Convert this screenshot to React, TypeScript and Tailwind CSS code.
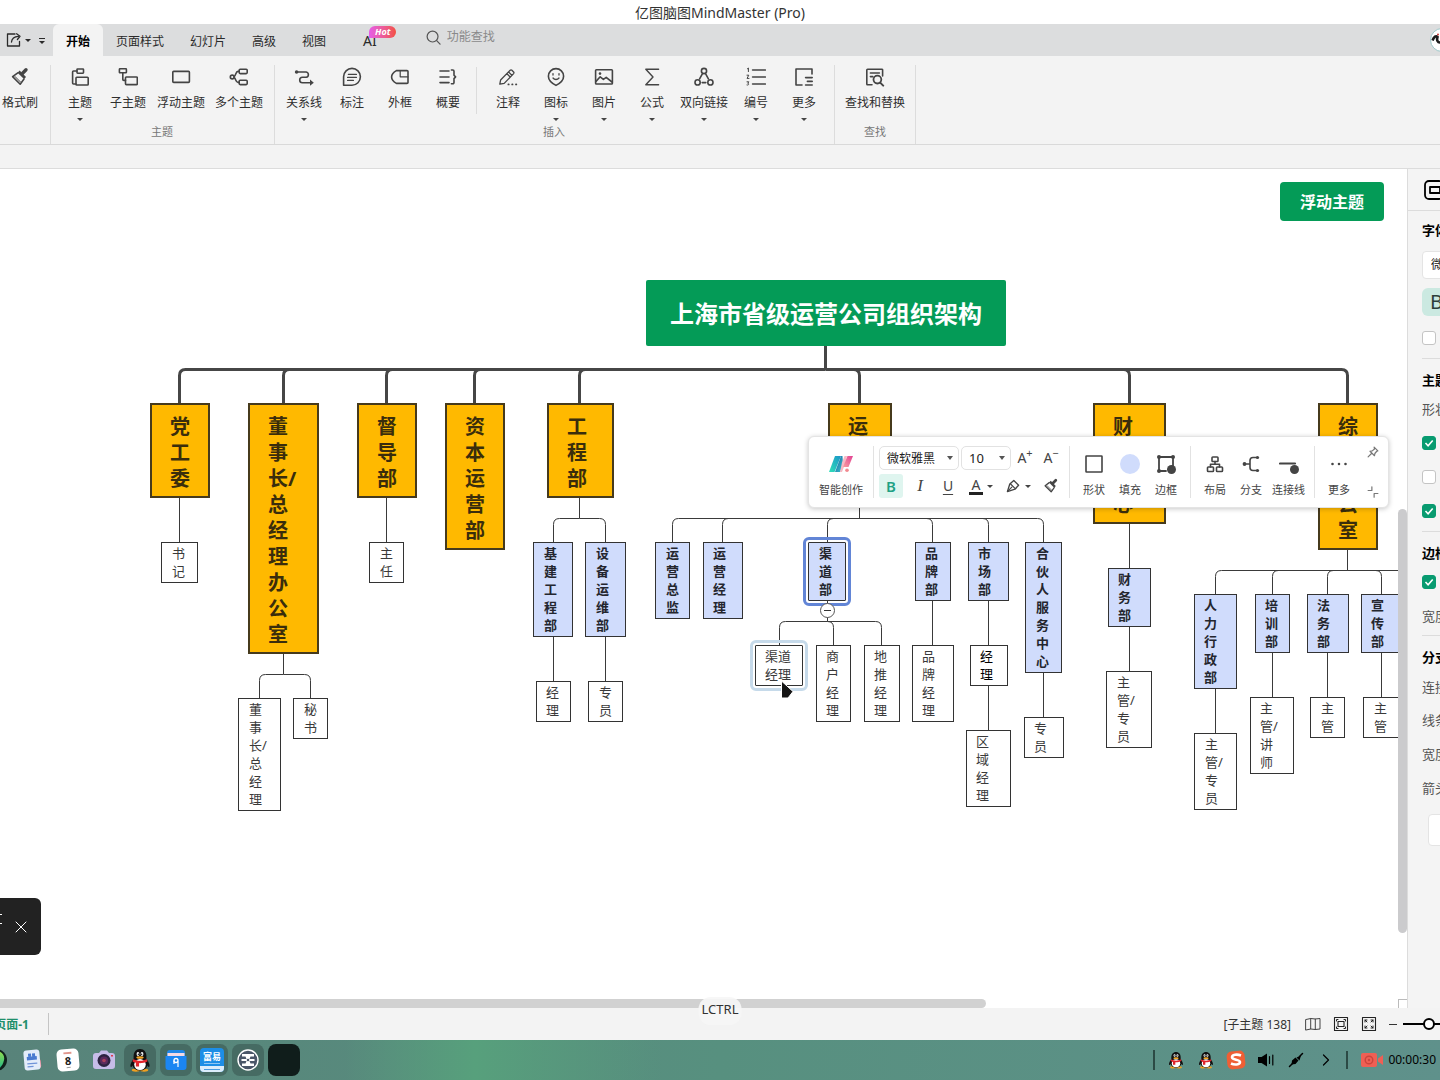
import React, { useState } from "react";

/* ------------------------------------------------------------------ */
/* Icons                                                               */
/* ------------------------------------------------------------------ */

type IconProps = { className?: string; children: React.ReactNode; box?: number };

function Icon({ className = "size-5", children, box = 20 }: IconProps) {
  return (
    <svg
      viewBox={`0 0 ${box} ${box}`}
      className={`shrink-0 ${className}`}
      fill="none"
      stroke="currentColor"
      strokeWidth="1.6"
      strokeLinejoin="round"
      strokeLinecap="round"
      aria-hidden="true"
    >
      {children}
    </svg>
  );
}

const Caret = ({ className = "h-[3px] w-1.5" }: { className?: string }) => (
  <svg viewBox="0 0 6 4" preserveAspectRatio="none" className={`shrink-0 ${className}`} aria-hidden="true">
    <path d="M0 0h6L3 4z" fill="currentColor" />
  </svg>
);

const brush = (
  <>
    <path d="M16 2.8 12.6 6.2" strokeWidth="3.4" />
    <path d="M8.6 4.6 15 11" strokeWidth="3" strokeLinecap="butt" />
    <path d="M7.8 5.8 2.6 9.6 10.2 17.2 14 12" />
    <path d="M5 9.5 10.5 15" strokeWidth="1" />
  </>
);
const topic = (
  <>
    <rect x="7" y="2" width="6.5" height="4.2" rx=".6" />
    <path d="M7 4H3.6a1 1 0 0 0-1 1v11a1 1 0 0 0 1 1H6" />
    <rect x="6" y="10.2" width="12.2" height="7.8" rx=".8" />
  </>
);
const subTopic = (
  <>
    <rect x="1.4" y="1.8" width="7" height="4" rx=".6" />
    <path d="M4.8 5.8v6.6a1 1 0 0 0 1 1h1.7" />
    <rect x="7.5" y="10" width="11.8" height="7.6" rx=".8" />
  </>
);
const floatTopic = <rect x="1.8" y="4.4" width="16.6" height="11" rx=".9" />;
const multiTopic = (
  <>
    <circle cx="3.2" cy="10" r="1.9" />
    <path d="M5.1 9.5C7 8.600 6.600 4.400 9 4.400h1.200M5.100 10.500c1.900.9 1.500 4.900 3.900 4.900h1.200" />
    <rect x="10.2" y="2.200" width="8" height="4.400" rx="1" />
    <rect x="10.2" y="13.200" width="8" height="4.400" rx="1" />
  </>
);
const relation = (
  <>
    <path d="M3 5h9.2a2.7 2.7 0 0 1 0 5.3H8.4a2.7 2.7 0 0 0 0 5.4h9" />
    <circle cx="2.6" cy="5" r="1.8" fill="currentColor" stroke="none" />
    <path d="m16 12.6 3.8 3.1-3.800 3z" fill="currentColor" stroke="none" />
  </>
);
const callout = (
  <>
    <path d="M1.6 18.2v-8.4a8.4 8.4 0 1 1 8.4 8.4z" />
    <path d="M6.4 7.4h8M5.6 10.4h8.8M5.6 13.4h5.8" strokeWidth="1.3" />
  </>
);
const frame = (
  <>
    <path d="M6.4 3.6H17a1 1 0 0 1 1 1v10.8a1 1 0 0 1-1 1H6.4C3.6 14.8 1.6 12.6 1.6 10s2-4.8 4.8-6.4z" />
    <path d="M10.2 3.8v6H18" strokeWidth="1.2" />
  </>
);
const summary = (
  <>
    <path d="M2 4h9M2 10h9M2 15.6h9" />
    <path d="M13.4 3h1.4a1.2 1.2 0 0 1 1.2 1.2v4l1.6 1.7-1.6 1.7v4a1.2 1.2 0 0 1-1.2 1.2h-1.4" />
  </>
);
const note = (
  <>
    <path d="m2.6 13 9.6-9.8a1.2 1.2 0 0 1 1.7 0l1.7 1.8a1.2 1.2 0 0 1 0 1.6L6.2 16.4l-4.4.8zM10.600 5l3.400 3.400M9 6.800l3.200 3.200" strokeWidth="1.3" />
    <path d="M10.4 17.4h.3M14.2 17.4h.3M18 17.4h.3" strokeWidth="1.8" />
  </>
);
const smile = (
  <>
    <path d="M10 18.4c-3.4-1.8-7.6-4.6-7.6-9.2a7.6 7.6 0 0 1 15.200 0c0 4.600-4.200 7.400-7.600 9.200z" />
    <path d="M7 6.6V8M13 6.6V8M7 11c1.5 2 4.500 2 6 0" strokeWidth="1.3" />
  </>
);
const picture = (
  <>
    <rect x="1.6" y="2.8" width="16.8" height="14.2" rx=".8" />
    <path d="m2 14.4 4.2-4.6 3.2 2.600 2.800-2 5.800 4.600" />
    <circle cx="6" cy="6.6" r="1.3" fill="currentColor" stroke="none" />
  </>
);
const sigma = <path d="M16.6 2.2H3.800L11 10l-7.200 7.800h12.800" strokeWidth="1.4" />;
const link = (
  <>
    <circle cx="10" cy="4" r="2.6" />
    <circle cx="3.6" cy="15.4" r="2.6" />
    <circle cx="16.4" cy="15.4" r="2.6" />
    <path d="M8.2 7.2 5.6 11.8M11.8 7.2l2.600 4.600M8.200 15.600h3.600" />
  </>
);
const numbering = (
  <>
    <path d="M6.600 3h12.800M6.600 10h12.800M6.600 17h12.800" />
    <path d="M1.4 1.8 2.4 1v3.600M1 8.200h1.800L1 11.400h2M1 14.800h1.800l-1 1.500c1.600.2 1 2.300-.8 1.700" strokeWidth="1" />
  </>
);
const more = (
  <>
    <path d="M8 18H2V2h16v5" />
    <path d="M11.6 10.6h6.600M13.400 14.400h4.800M11.600 18h6.600" />
  </>
);
const findReplace = (
  <>
    <path d="M7 17.8H2.600a.8.8 0 0 1-.8-.8V3a.8.8 0 0 1 .8-.8h14.200a.8.8 0 0 1 .8.8v6" />
    <path d="M5.400 6h9M5.400 9.600h2.400" />
    <circle cx="12.4" cy="12.6" r="3.9" strokeWidth="1.8" />
    <path d="m15.200 15.600 3 3" strokeWidth="2" />
  </>
);

const Penguin = ({ className }: { className: string }) => (
  <svg viewBox="0 0 24 26" className={`shrink-0 ${className}`} aria-hidden="true">
    <ellipse cx="7.5" cy="24" rx="4.5" ry="1.8" fill="#f0a020" />
    <ellipse cx="16.5" cy="24" rx="4.5" ry="1.8" fill="#f0a020" />
    <path d="M5 12C1.5 16 1 20 2 20.5c1 .4 2-1.500 2-1.500h16s1 1.900 2 1.500c1-.5.5-4.500-3-8.500z" fill="#111" />
    <path d="M12 1C7.5 1 5 4.5 5 9v5h14V9c0-4.500-2.500-8-7-8z" fill="#111" />
    <ellipse cx="12" cy="17.5" rx="8.2" ry="7" fill="#111" />
    <ellipse cx="12" cy="18" rx="6.3" ry="6" fill="#fff" />
    <path d="M4.5 12c4.500 2.600 10.500 2.600 15 0l.6 2.600c-2.500 1.300-6 1.900-9.100 1.800V20H7.500v-4.100c-1.500-.3-2.700-.7-3.600-1.300z" fill="#e0262c" />
    <ellipse cx="9.8" cy="6.4" rx="1.5" ry="2.1" fill="#fff" />
    <ellipse cx="14.2" cy="6.4" rx="1.5" ry="2.1" fill="#fff" />
    <circle cx="10.2" cy="6.7" r=".8" fill="#111" />
    <circle cx="13.8" cy="6.7" r=".8" fill="#111" />
    <ellipse cx="12" cy="10.2" rx="4" ry="1.4" fill="#f5a623" />
  </svg>
);

/* ------------------------------------------------------------------ */
/* Ribbon                                                              */
/* ------------------------------------------------------------------ */

type Tool = { label: string; icon: React.ReactNode; width?: string; caret?: boolean };

function RibbonButton({ label, icon, width = "w-12", caret }: Tool) {
  return (
    <button type="button" className={`flex shrink-0 flex-col items-center ${width}`}>
      <Icon>{icon}</Icon>
      <span className="mt-2 text-xs leading-4 whitespace-nowrap text-[#2e2e2e]">{label}</span>
      {caret && <Caret className="mt-[7px] h-[3px] w-1.5" />}
    </button>
  );
}

function RibbonGroup({ title, pad, children }: { title: string; pad: string; children: React.ReactNode }) {
  return (
    <section className={`flex shrink-0 flex-col border-r border-[#dcdcdc] ${pad}`}>
      <div className="mt-0.5 flex h-[57px]">{children}</div>
      <h2 className="text-center text-[11px] leading-4 text-[#777]">{title}</h2>
    </section>
  );
}

const topicTools: Tool[] = [
  { label: "主题", icon: topic, caret: true },
  { label: "子主题", icon: subTopic },
  { label: "浮动主题", icon: floatTopic, width: "w-[58px]" },
  { label: "多个主题", icon: multiTopic, width: "w-[58px]" },
];
const markTools: Tool[] = [
  { label: "关系线", icon: relation, caret: true },
  { label: "标注", icon: callout },
  { label: "外框", icon: frame },
  { label: "概要", icon: summary },
];
const insertTools: Tool[] = [
  { label: "注释", icon: note },
  { label: "图标", icon: smile, caret: true },
  { label: "图片", icon: picture, caret: true },
  { label: "公式", icon: sigma, caret: true },
  { label: "双向链接", icon: link, width: "w-14", caret: true },
  { label: "编号", icon: numbering, caret: true },
  { label: "更多", icon: more, caret: true },
];

function Ribbon() {
  return (
    <div className="flex h-[89px] shrink-0 overflow-hidden border-b border-[#d9d9d9] bg-[#f3f3f3] pt-[9px] text-[#444]">
      <section className="flex w-[51px] shrink-0 border-r border-[#dcdcdc] pt-0.5">
        <RibbonButton label="格式刷" icon={brush} width="w-10" />
      </section>
      <RibbonGroup title="主题" pad="pl-[5px] pr-[6px]">
        {topicTools.map((t) => (
          <RibbonButton key={t.label} {...t} />
        ))}
      </RibbonGroup>
      <RibbonGroup title="插入" pad="pl-[5px] pr-[6px]">
        {markTools.map((t) => (
          <RibbonButton key={t.label} {...t} />
        ))}
        <div className="mr-[7px] ml-1 h-[47px] w-px bg-[#dcdcdc]" />
        {insertTools.map((t) => (
          <RibbonButton key={t.label} {...t} />
        ))}
      </RibbonGroup>
      <RibbonGroup title="查找" pad="px-2">
        <RibbonButton label="查找和替换" icon={findReplace} width="w-16" />
      </RibbonGroup>
    </div>
  );
}

function TabBar() {
  const tabs = ["开始", "页面样式", "幻灯片", "高级", "视图"];
  return (
    <div className="flex h-8 shrink-0 items-stretch overflow-hidden bg-[#dcddde] text-[#2a2a2a]">
      <div className="flex w-[53px] shrink-0 items-center pl-1.5">
        <button type="button" aria-label="导出" className="flex items-center gap-[3px]">
          <Icon className="size-4" box={16}>
            <path d="M9 2H1.500v12h12V9.500M5.500 10c.3-3.600 2.500-5.500 7-5.700" strokeWidth="1.3" />
            <path d="m10.600 1.800 3.400 2.500-2.600 3.200" strokeWidth="1.3" />
          </Icon>
          <Caret />
        </button>
        <button type="button" aria-label="自定义快速访问" className="mt-0.5 ml-2 flex flex-col items-center gap-0.5">
          <span className="h-px w-1.5 bg-[#2a2a2a]" />
          <Caret />
        </button>
      </div>
      <nav className="flex shrink-0 text-xs">
        {tabs.map((t, i) => (
          <button
            key={t}
            type="button"
            className={
              i === 0
                ? "rounded-t-md bg-[#f3f3f3] px-[13px] pt-[3px] font-bold text-black"
                : "px-[13px] pt-[3px]"
            }
          >
            {t}
          </button>
        ))}
        <button type="button" className="relative ml-[11px] px-[13px] pt-0.5 text-sm">
          AI
          <span className="absolute top-0.5 left-[19px] rounded-full rounded-bl-none bg-linear-to-r from-[#e65be8] to-[#f3503f] px-1.5 text-[9px] leading-3 font-bold text-white italic">
            Hot
          </span>
        </button>
      </nav>
      <label className="ml-9 flex h-[26px] w-40 shrink-0 items-center gap-1.5 text-[#555]">
        <Icon className="size-[15px]" box={16}>
          <circle cx="7" cy="7" r="5.8" strokeWidth="1.3" />
          <path d="m11.400 11.400 3.600 3.600" strokeWidth="1.3" />
        </Icon>
        <input
          type="text"
          aria-label="功能查找"
          placeholder="功能查找"
          className="w-full bg-transparent text-xs outline-none placeholder:text-[#8a8a8a]"
        />
      </label>
      <div className="ml-auto -mr-3.5 flex shrink-0 items-center">
        <svg viewBox="0 0 24 24" className="size-6" aria-hidden="true">
          <circle cx="12" cy="12" r="11.5" fill="#fff" stroke="#9cc7c9" />
          <path d="M2.500 12.500C4 8.500 6 7.500 7.500 9c-1 3 0 6 3 5.500 2-.5 3-3 5.500-2.500" fill="none" stroke="#1c1c1c" strokeWidth="2.600" />
          <circle cx="8" cy="6.500" r="1" fill="#c33" />
        </svg>
      </div>
    </div>
  );
}

/* ------------------------------------------------------------------ */
/* Org chart                                                           */
/* ------------------------------------------------------------------ */

type Kind = "dept" | "team" | "role";
type ChartNode = {
  kind: Kind;
  x: number;
  y: number;
  w: number;
  pad: number;
  lines: string[];
  state?: "selected" | "hover" | "dark";
};

/* Chart coordinates are measured from the window's top edge. */
const CHART_TOP = 169;

const n = (kind: Kind, x: number, y: number, w: number, pad: number, text: string, state?: ChartNode["state"]): ChartNode => ({
  kind,
  x,
  y,
  w,
  pad,
  lines: text.split(" "),
  state,
});

const nodes: ChartNode[] = [
  n("dept", 150, 403, 60, 18, "党 工 委"),
  n("dept", 248, 403, 71, 18, "董 事 长/ 总 经 理 办 公 室"),
  n("dept", 357, 403, 60, 18, "督 导 部"),
  n("dept", 445, 403, 60, 18, "资 本 运 营 部"),
  n("dept", 547, 403, 67, 18, "工 程 部"),
  n("dept", 828, 403, 64, 18, "运 营 部"),
  n("dept", 1093, 403, 73, 18, "财 务 中 心"),
  n("dept", 1318, 403, 60, 18, "综 合 办 公 室"),
  n("role", 161, 542, 37, 10, "书 记"),
  n("role", 369, 542, 35, 10, "主 任"),
  n("role", 238, 698, 43, 10, "董 事 长/ 总 经 理"),
  n("role", 293, 698, 35, 10, "秘 书"),
  n("team", 533, 542, 40, 10, "基 建 工 程 部"),
  n("team", 585, 542, 41, 10, "设 备 运 维 部"),
  n("role", 536, 681, 35, 9, "经 理"),
  n("role", 588, 681, 35, 10, "专 员"),
  n("team", 655, 542, 35, 10, "运 营 总 监"),
  n("team", 703, 542, 40, 9, "运 营 经 理"),
  n("team", 808, 542, 38, 10, "渠 道 部", "selected"),
  n("team", 915, 542, 36, 9, "品 牌 部"),
  n("team", 968, 542, 41, 9, "市 场 部"),
  n("team", 1025, 542, 37, 10, "合 伙 人 服 务 中 心"),
  n("role", 755, 645, 48, 9, "渠道 经理", "hover"),
  n("role", 816, 645, 35, 9, "商 户 经 理"),
  n("role", 864, 645, 36, 9, "地 推 经 理"),
  n("role", 912, 645, 42, 9, "品 牌 经 理"),
  n("role", 970, 645, 38, 9, "经 理", "dark"),
  n("role", 966, 730, 45, 9, "区 域 经 理"),
  n("role", 1024, 717, 40, 9, "专 员"),
  n("team", 1108, 568, 43, 9, "财 务 部"),
  n("role", 1106, 671, 46, 10, "主 管/ 专 员"),
  n("team", 1194, 594, 43, 9, "人 力 行 政 部"),
  n("team", 1255, 594, 35, 9, "培 训 部"),
  n("team", 1307, 594, 42, 9, "法 务 部"),
  n("team", 1361, 594, 42, 9, "宣 传 部"),
  n("role", 1194, 733, 43, 10, "主 管/ 专 员"),
  n("role", 1250, 697, 44, 9, "主 管/ 讲 师"),
  n("role", 1310, 697, 35, 10, "主 管"),
  n("role", 1363, 697, 38, 10, "主 管"),
];

const kindClass: Record<Kind, string> = {
  dept: "border-2 border-[#463a1c] bg-[#ffb900] pt-[9px] pb-1 text-[20px] leading-[26px] font-bold text-[#3a2d0c]",
  team: "border border-[#333] bg-[#d0dcfc] pt-px pb-0.5 text-[13px] leading-[18px] font-bold text-[#24262e]",
  role: "border border-[#333] bg-white pt-px pb-0.5 text-[13px] leading-[18px] text-[#3a3a3a]",
};
const stateClass = {
  selected: "rounded-[1px] outline-3 outline-offset-2 outline-[#6285d6]",
  hover: "rounded-[1px] outline-3 outline-offset-2 outline-[#c6daea]",
  dark: "text-black",
};

function NodeBox({ node }: { node: ChartNode }) {
  return (
    <div
      className={`absolute whitespace-nowrap ${kindClass[node.kind]} ${node.state ? stateClass[node.state] : ""}`}
      style={{ left: node.x, top: node.y - CHART_TOP, width: node.w, paddingLeft: node.pad }}
    >
      {node.lines.map((line, i) => (
        <div key={i}>{line}</div>
      ))}
    </div>
  );
}

/* A bus line with rounded drops to each child. */
function branch(trunk: number, top: number, bus: number, bottom: number, kids: number[]) {
  const r = 6;
  const drops = kids.map((k) => {
    const s = k < trunk ? r : -r;
    return `M${k} ${bottom}V${bus + r}Q${k} ${bus} ${k + s} ${bus}H${trunk}`;
  });
  return `M${trunk} ${top}V${bus}${drops.join("")}`;
}

const thinLines = [
  branch(283.5, 654, 674.5, 698, [259.5, 310.5]),
  branch(579.5, 498, 518.5, 542, [553.5, 605.5]),
  branch(859.5, 498, 518.5, 542, [672.5, 722.5, 827.5, 932.5, 988.5, 1043.5]),
  branch(827.5, 601, 621.5, 645, [779.5, 833.5, 881.5]),
  branch(1347.5, 550, 570.5, 594, [1215.5, 1272.5, 1327.5, 1381.5]),
  "M1375 570.5H1440",
  "M179.5 498V542M386.5 498V542M553.5 637V681M605.5 637V681",
  "M932.5 601V645M988.5 601V645M988.5 686V730M1043.5 673V717",
  "M1129.5 524V568M1129.5 627V671M1215.5 689V733M1272.5 653V697M1327.5 653V697M1381.5 653V697",
].join("");

function Chart() {
  return (
    <>
      <svg
        viewBox="0 169 1440 830"
        className="absolute top-0 left-0 h-[830px] w-[1440px]"
        fill="none"
        aria-hidden="true"
      >
        <path
          d={branch(825.5, 346, 369.5, 403, [179.5, 283.5, 386.5, 474.5, 579.5, 859.5, 1129.5, 1347.5])}
          stroke="#464646"
          strokeWidth="3"
        />
        <path d={thinLines} stroke="#3a3a3a" strokeWidth="1" />
      </svg>
      <div className="absolute top-[111px] left-[646px] rounded-xs bg-[#049b57] px-6 pt-4 pb-3.5 text-2xl leading-9 font-bold whitespace-nowrap text-white">
        上海市省级运营公司组织架构
      </div>
      <div className="absolute top-[13px] left-[1280px] rounded bg-[#049b57] px-5 pt-[9px] pb-[7px] text-base leading-[23px] font-bold whitespace-nowrap text-white">
        浮动主题
      </div>
      {nodes.map((node, i) => (
        <NodeBox key={i} node={node} />
      ))}
      <button
        type="button"
        aria-label="收起子主题"
        className="absolute top-[434px] left-[820px] grid size-[15px] place-items-center rounded-full border border-[#555] bg-white"
      >
        <span className="h-px w-[7px] bg-[#333]" />
      </button>
      <svg viewBox="0 0 14 20" className="absolute top-[511px] left-[780px] h-5 w-3.5" aria-hidden="true">
        <path d="M1.500 1v17h6.500l5-6.500z" fill="#151515" stroke="#fff" />
      </svg>
    </>
  );
}

/* ------------------------------------------------------------------ */
/* Floating format bar                                                 */
/* ------------------------------------------------------------------ */

function FormatItem({ label, icon, width = "w-9" }: { label: string; icon: React.ReactNode; width?: string }) {
  return (
    <button type="button" className={`flex shrink-0 flex-col items-center pt-[17px] ${width}`}>
      {icon}
      <span className="mt-2 text-[11px] leading-4 whitespace-nowrap text-[#444]">{label}</span>
    </button>
  );
}

const BarRule = () => <div className="h-[52px] w-px shrink-0 self-center bg-[#e2e2e2]" />;

function Dropdown({ label, value, width, size }: { label: string; value: string; width: string; size: string }) {
  return (
    <div className={`relative flex h-6 items-center rounded-[5px] border border-[#e2e2e2] ${width}`}>
      <select
        aria-label={label}
        defaultValue={value}
        className={`h-full w-full appearance-none bg-transparent pt-px pl-[7px] text-[#1d1d1d] outline-none ${size}`}
      >
        <option>{value}</option>
      </select>
      <Caret className="pointer-events-none absolute right-[5px] h-1 w-1.5 text-[#555]" />
    </div>
  );
}

function FormatBar() {
  return (
    <div
      role="toolbar"
      aria-label="格式"
      className="absolute top-[267px] left-[808px] flex h-[72px] rounded-md border border-[#e4e4e4] bg-white text-[#444] shadow-[0_1px_5px_rgba(0,0,0,0.22)]"
    >
      <FormatItem
        label="智能创作"
        width="w-16"
        icon={
          <svg viewBox="0 0 24 20" className="h-5 w-6" aria-hidden="true">
            <defs>
              <linearGradient id="mA" x1="0" y1="1" x2="1" y2="0">
                <stop offset="0" stopColor="#2fe0b8" />
                <stop offset="1" stopColor="#1a94c8" />
              </linearGradient>
              <linearGradient id="mB" x1="0" y1="0" x2="1" y2="1">
                <stop offset="0" stopColor="#1e5c9c" />
                <stop offset="1" stopColor="#35c7cf" />
              </linearGradient>
              <linearGradient id="mC" x1="0" y1="1" x2="1" y2="0">
                <stop offset="0" stopColor="#f8a0a0" />
                <stop offset="1" stopColor="#e23f92" />
              </linearGradient>
            </defs>
            <path d="M6 2h6L5.500 18H0z" fill="url(#mA)" />
            <path d="M10.500 6 12 2h1.500l.5 8-3 8H6z" fill="url(#mB)" />
            <path d="M13 8.500 15.500 2H18l-2.500 9.500L13 18h-2z" fill="#f7b9c4" />
            <path d="M18.500 2H24l-4.500 11H14z" fill="url(#mC)" />
            <circle cx="18" cy="16.300" r="1.800" fill="#f2898f" />
          </svg>
        }
      />
      <BarRule />
      <div className="flex w-[195px] shrink-0 flex-col pt-[9px] pl-[5px]">
        <div className="flex items-center">
          <Dropdown label="字体" value="微软雅黑" width="w-20" size="text-xs" />
          <div className="ml-0.5">
            <Dropdown label="字号" value="10" width="w-[50px]" size="text-[13px]" />
          </div>
          <button type="button" aria-label="增大字号" className="ml-px w-[26px] text-sm leading-5">
            A<sup className="-top-1.5 text-[11px]">+</sup>
          </button>
          <button type="button" aria-label="减小字号" className="w-[26px] text-sm leading-5">
            A<sup className="-top-1.5 text-[11px]">−</sup>
          </button>
        </div>
        <div className="mt-1 flex h-6 items-center">
          <button type="button" aria-label="加粗" className="grid size-6 place-items-center rounded-[3px] bg-[#dff5ef] text-[15px] leading-none font-semibold text-[#1fa184]">
            B
          </button>
          <button type="button" aria-label="斜体" className="ml-[7px] w-5 font-['Liberation_Serif'] text-[17px] leading-5 italic">
            I
          </button>
          <button type="button" aria-label="下划线" className="ml-2 w-5 text-sm leading-5 underline underline-offset-3">
            U
          </button>
          <button type="button" aria-label="文字颜色" className="ml-[11px] flex items-center gap-1">
            <span className="w-[14px] border-b-3 border-[#222] text-sm leading-[14px]">A</span>
            <Caret />
          </button>
          <button type="button" aria-label="高亮" className="ml-3 flex items-center gap-1">
            <Icon className="size-4">
              <path d="M3 17 6 7.500 11 3l6 6-4.500 5z" strokeWidth="1.700" />
              <path d="m3.500 16.500 5-5M7 7.500l5.500 5.500" strokeWidth="1.500" />
            </Icon>
            <Caret />
          </button>
          <button type="button" aria-label="格式刷" className="ml-3">
            <Icon className="size-4">{brush}</Icon>
          </button>
        </div>
      </div>
      <BarRule />
      <div className="flex shrink-0 px-1.5">
        <FormatItem label="形状" icon={<Icon><rect x="2" y="2" width="16" height="16" rx=".5" /></Icon>} />
        <FormatItem label="填充" icon={<span className="size-5 rounded-full bg-[#d0dcfc]" />} />
        <FormatItem
          label="边框"
          icon={
            <Icon>
              <path d="M3 3h14v9M3 3v14h7" strokeWidth="1.8" />
              <g fill="currentColor" stroke="none">
                <circle cx="3" cy="3" r="2" />
                <circle cx="17" cy="3" r="2" />
                <circle cx="3" cy="17" r="2" />
                <circle cx="15.5" cy="15.5" r="4.5" />
              </g>
            </Icon>
          }
        />
      </div>
      <BarRule />
      <div className="flex shrink-0 px-1.5">
        <FormatItem
          label="布局"
          icon={
            <Icon>
              <rect x="7" y="3" width="6" height="4.5" rx=".8" />
              <rect x="2.5" y="13" width="6" height="4.5" rx=".8" />
              <rect x="11.5" y="13" width="6" height="4.5" rx=".8" />
              <path d="M10 7.500v2.700M5.500 13v-2.800h9V13" />
            </Icon>
          }
        />
        <FormatItem
          label="分支"
          icon={
            <Icon>
              <path d="M4 10h5M16 3.500h-4a3 3 0 0 0-3 3v7a3 3 0 0 0 3 3h4" />
              <g fill="currentColor" stroke="none">
                <circle cx="3.5" cy="10" r="1.9" />
                <circle cx="16.5" cy="3.5" r="1.6" />
                <circle cx="16.5" cy="16.5" r="1.6" />
              </g>
            </Icon>
          }
        />
        <FormatItem
          label="连接线"
          width="w-[39px]"
          icon={
            <Icon>
              <path d="M1 9.500h15" strokeWidth="2.200" />
              <circle cx="15.5" cy="15.5" r="4.5" fill="currentColor" stroke="none" />
            </Icon>
          }
        />
      </div>
      <BarRule />
      <div className="flex shrink-0 pl-1.5">
        <FormatItem label="更多" icon={<Icon><path d="M3.500 10h.01M10 10h.01M16.500 10h.01" strokeWidth="2.600" /></Icon>} />
      </div>
      <div className="flex w-[31px] shrink-0 flex-col items-center justify-between py-[9px] text-[#777]">
        <button type="button" aria-label="固定">
          <Icon className="size-3" box={16}>
            <path d="m9.500 1.500 5 5-1.500.5-2.500 3-.5 3-6-6 3-.5 3-2.500zM6 10l-4.500 4.500" />
          </Icon>
        </button>
        <button type="button" aria-label="收起">
          <Icon className="size-3" box={16}>
            <path d="M1.500 6h5V1M14.500 10h-5v5" />
          </Icon>
        </button>
      </div>
    </div>
  );
}

/* ------------------------------------------------------------------ */
/* Right-hand panel                                                    */
/* ------------------------------------------------------------------ */

const PanelHeading = ({ children }: { children: React.ReactNode }) => (
  <h2 className="flex h-[42px] items-center pt-0.5 text-[13px] font-bold text-black">{children}</h2>
);
const PanelRow = ({ children }: { children: React.ReactNode }) => (
  <div className="flex h-[34px] items-center text-[13px] text-[#555]">{children}</div>
);

function Tick({ label, on }: { label: string; on?: boolean }) {
  const [checked, setChecked] = useState(!!on);
  return (
    <span className="relative grid size-3.5 place-items-center">
      <input
        type="checkbox"
        aria-label={label}
        checked={checked}
        onChange={(e) => setChecked(e.target.checked)}
        className="size-3.5 appearance-none rounded-[3px] border border-[#c4c4c4] bg-white checked:border-[#089b70] checked:bg-[#089b70]"
      />
      {checked && (
        <svg viewBox="0 0 14 14" className="pointer-events-none absolute inset-0 size-3.5" fill="none" stroke="#fff" strokeWidth="1.6" aria-hidden="true">
          <path d="m3.500 7 2.600 2.700 4.600-5.200" />
        </svg>
      )}
    </span>
  );
}

function SidePanel() {
  return (
    <aside className="w-[33px] shrink-0 overflow-hidden border-l border-[#dcdcdc] bg-[#f4f4f4]">
      <div className="w-[260px]">
        <div className="flex h-[42px] items-center border-b border-[#dcdcdc] pl-4">
          <Icon className="size-5 text-black">
            <rect x="1" y="1" width="18" height="18" rx="4" strokeWidth="1.8" />
            <rect x="6" y="7" width="10" height="6" strokeWidth="1.8" />
          </Icon>
        </div>
        <div className="pl-3.5">
          <h2 className="flex h-10 items-center text-[13px] font-bold text-black">字体</h2>
          <select
            aria-label="字体"
            defaultValue="微软雅黑"
            className="block h-7 w-40 appearance-none rounded border border-[#e4e4e4] bg-white pl-2 text-xs text-[#222]"
          >
            <option>微软雅黑</option>
          </select>
          <button type="button" aria-label="加粗" className="mt-[9px] block h-7 w-8 rounded-md bg-[#cbe9e1] pl-2 text-left text-[20px] leading-7 text-[#2b3d3a]">
            B
          </button>
          <div className="mt-px flex h-[42px] items-center border-b border-[#dcdcdc]">
            <Tick label="自动适应" />
          </div>
          <PanelHeading>主题</PanelHeading>
          <div className="flex h-[18px] items-center text-[13px] text-[#555]">形状</div>
          <div className="border-b border-[#dcdcdc] pt-[7px] pb-[3px]">
            <PanelRow><Tick label="填充" on /></PanelRow>
            <PanelRow><Tick label="阴影" /></PanelRow>
            <PanelRow><Tick label="自定义宽度" on /></PanelRow>
          </div>
          <PanelHeading>边框</PanelHeading>
          <div className="flex h-4 items-center"><Tick label="边框" on /></div>
          <div className="mt-2 flex h-[38px] items-center border-b border-[#dcdcdc] text-[13px] text-[#555]">宽度</div>
          <PanelHeading>分支</PanelHeading>
          <div className="mt-px mb-[7px] flex h-[18px] items-center text-[13px] text-[#555]">连接线</div>
          <PanelRow>线条</PanelRow>
          <PanelRow>宽度</PanelRow>
          <PanelRow>箭头</PanelRow>
          <div className="mt-2 ml-1.5 h-8 w-40 rounded border border-[#e4e4e4] bg-white" />
        </div>
      </div>
    </aside>
  );
}

/* ------------------------------------------------------------------ */
/* Status bar and taskbar                                              */
/* ------------------------------------------------------------------ */

function StatusBar() {
  return (
    <footer className="flex h-8 shrink-0 items-center overflow-hidden bg-[#f3f3f3] text-xs text-[#333]">
      <button type="button" className="flex h-[22px] w-[49px] shrink-0 items-center justify-end border-r border-[#c4c4c4] pt-0.5 pr-[19px] font-bold whitespace-nowrap text-[#1f8f6b]">
        页面-1
      </button>
      <div className="ml-auto -mr-[19px] flex shrink-0 items-center">
        <span className="pt-0.5">[子主题 138]</span>
        <button type="button" aria-label="导航图" className="ml-3.5">
          <Icon className="size-4 text-[#444]" box={16}>
            <path d="m1 3.500 4.700-1v10.500L1 14zM5.700 2.500 10.300 3v10.500l-4.600-.5M10.300 3 15 2.500V13l-4.700.5" strokeWidth="1" />
          </Icon>
        </button>
        <button type="button" aria-label="适应窗口" className="ml-3">
          <Icon className="size-4 text-[#222]" box={16}>
            <rect x="1.500" y="1.500" width="13" height="13" strokeWidth="1.1" />
            <rect x="5" y="5.500" width="6" height="5" strokeWidth="1.1" />
            <path d="M3.500 5V3.500H5M11 3.500h1.500V5M12.500 11v1.500H11M5 12.500H3.500V11" strokeWidth="1" />
          </Icon>
        </button>
        <button type="button" aria-label="全屏" className="ml-3">
          <Icon className="size-4 text-[#222]" box={16}>
            <rect x="1.500" y="1.500" width="13" height="13" strokeWidth="1.1" />
            <path d="M4 6V4h2M4 4l2 2M10 4h2v2M12 4l-2 2M12 10v2h-2M12 12l-2-2M6 12H4v-2M4 12l2-2" strokeWidth="1" />
          </Icon>
        </button>
        <button type="button" aria-label="缩小" className="ml-3 flex h-4 w-2 items-center">
          <span className="h-px w-full bg-[#333]" />
        </button>
        <input
          type="range"
          aria-label="缩放"
          defaultValue={46}
          className="ml-1.5 h-4 w-14 appearance-none bg-transparent [&::-webkit-slider-runnable-track]:h-0.5 [&::-webkit-slider-runnable-track]:bg-black [&::-webkit-slider-thumb]:-mt-[5px] [&::-webkit-slider-thumb]:size-3 [&::-webkit-slider-thumb]:appearance-none [&::-webkit-slider-thumb]:rounded-full [&::-webkit-slider-thumb]:border-2 [&::-webkit-slider-thumb]:border-black [&::-webkit-slider-thumb]:bg-white"
        />
      </div>
    </footer>
  );
}

function DockItem({ label, active, children }: { label: string; active?: boolean; children: React.ReactNode }) {
  return (
    <button
      type="button"
      aria-label={label}
      className={
        active
          ? "grid size-8 shrink-0 place-items-center overflow-hidden rounded-lg bg-[#466b63]"
          : "grid size-8 shrink-0 place-items-center overflow-hidden rounded-lg"
      }
    >
      {children}
    </button>
  );
}

function Taskbar() {
  return (
    <div className="flex h-10 shrink-0 items-center overflow-hidden bg-linear-to-r from-[#58837a] via-[#57907f] to-[#5f918b]">
      <div className="flex h-full w-full items-center bg-linear-to-r from-transparent from-24% via-[#57a07c] via-33% to-transparent to-46%">
        <div className="-ml-5 flex shrink-0 gap-1">
          <DockItem label="启动器">
            <svg viewBox="0 0 22 22" className="size-[22px]" aria-hidden="true">
              <defs>
                <linearGradient id="launch" x1="0" y1="0" x2="0" y2="1">
                  <stop offset="0" stopColor="#9be04a" />
                  <stop offset="1" stopColor="#1fb68a" />
                </linearGradient>
              </defs>
              <circle cx="11" cy="11" r="11" fill="#10201c" />
              <path d="M11 1c6 2 9 5 8 10s-3 8-8 9C6 20 2 16 2 11S6 2 11 1z" fill="url(#launch)" />
            </svg>
          </DockItem>
          <DockItem label="文档">
            <svg viewBox="0 0 22 22" className="size-[22px]" aria-hidden="true">
              <rect x="14" y="10" width="6" height="9" rx="2" fill="#f07a8c" transform="rotate(-6 17 15)" />
              <g transform="rotate(-5 11 11)">
                <rect x="3" y="1" width="16" height="20" rx="3" fill="#e3ecfa" />
                <path d="M7.500 4.500h3v3h-3zM11.500 4.500h3v3h-3zM6 7.500h10V11H6z" fill="#4a7ad0" />
                <path d="M6 14.500h10M6 17.500h6" stroke="#6f93d8" strokeWidth="1.200" />
              </g>
            </svg>
          </DockItem>
          <DockItem label="日历">
            <span className="flex size-[22px] -rotate-5 flex-col items-center justify-center rounded-[5px] bg-white">
              <span className="mb-px h-0.5 w-2 bg-[#e0968c]" />
              <span className="text-[11px] leading-[11px] font-bold text-[#222]">8</span>
              <span className="mt-px h-px w-1 bg-[#999]" />
            </span>
          </DockItem>
          <DockItem label="相机">
            <svg viewBox="0 0 24 22" className="h-[22px] w-6" aria-hidden="true">
              <path d="M4 4h3l2-2.500h6L17 4h3a3 3 0 0 1 3 3v10a3 3 0 0 1-3 3H4a3 3 0 0 1-3-3V7a3 3 0 0 1 3-3z" fill="#c6bce8" />
              <circle cx="12" cy="11.5" r="6.5" fill="#2c2340" />
              <circle cx="12" cy="11.5" r="4" fill="#5a2a5c" />
              <circle cx="12" cy="11.5" r="1.8" fill="#a8405c" />
              <rect x="19" y="6" width="2" height="1.5" fill="#e03a4a" />
            </svg>
          </DockItem>
          <DockItem label="QQ" active>
            <Penguin className="h-6 w-[22px]" />
          </DockItem>
          <DockItem label="文件管理器" active>
            <svg viewBox="0 0 22 22" className="size-[22px]" aria-hidden="true">
              <rect x="2" y="1" width="18" height="8" rx="3" fill="#1f87e8" />
              <rect x="2.5" y="4" width="17" height="5" fill="#f3d9e4" />
              <path d="M.5 7h21v11a3 3 0 0 1-3 3h-15a3 3 0 0 1-3-3z" fill="#1b86f2" />
              <circle cx="11" cy="11.5" r="2" fill="none" stroke="#fff" strokeWidth="1.3" />
              <path d="M9 11.500V15M13 12.500V18" fill="none" stroke="#fff" strokeWidth="1.2" />
            </svg>
          </DockItem>
          <DockItem label="富易" active>
            <span className="flex size-6 flex-col overflow-hidden rounded-[4px] bg-[#1d8ee6] text-center">
              <span className="pt-0.5 text-[9px] leading-[13px] font-bold whitespace-nowrap text-white">富易</span>
              <span className="mx-auto h-px w-4 bg-[#8fc6f3]" />
              <span className="mt-auto flex h-1.5 items-center justify-center bg-[#dcedfb]">
                <span className="h-px w-4 bg-[#4a9be0]" />
              </span>
            </span>
          </DockItem>
          <DockItem label="终端工具" active>
            <svg viewBox="0 0 22 22" className="size-[22px]" aria-hidden="true">
              <circle cx="11" cy="11" r="10" fill="#4a5668" stroke="#fff" strokeWidth="1.4" />
              <path d="M5 5h12v2.500h-3.500L12.500 10h5v2h-5l1 2.500H17V17H5v-2.500h3.500l1-2.500h-5v-2h5l-1-2.500H5z" fill="#fff" />
              <circle cx="11" cy="11" r="1.300" fill="#4a5668" />
            </svg>
          </DockItem>
          <DockItem label="录屏">
            <span className="size-8 bg-[#101d1b]" />
          </DockItem>
        </div>
        <div className="mr-1 ml-auto flex shrink-0 items-center text-black">
          <span className="mr-1.5 h-5 w-0.5 bg-[#2c4a45]" />
          <span className="grid w-[30px] place-items-center"><Penguin className="h-[18px] w-4" /></span>
          <span className="grid w-[30px] place-items-center"><Penguin className="h-[18px] w-4" /></span>
          <span className="grid w-[30px] place-items-center">
            <svg viewBox="0 0 20 20" className="size-5" aria-hidden="true">
              <rect x="1" y="1" width="18" height="18" rx="5" fill="#ee5f35" transform="rotate(-6 10 10)" />
              <path d="M15 5.500C11 4 6 4.500 6 7.300c0 3 8 1.700 8 4.700 0 2.800-5.500 3.200-9 1.500" fill="none" stroke="#fff" strokeWidth="2.6" />
            </svg>
          </span>
          <span className="grid w-[30px] place-items-center">
            <Icon className="size-4" box={16}>
              <path d="M0 5h3.500L9 1.500v13L3.500 11H0z" fill="currentColor" stroke="none" />
              <path d="M11.500 4.500v7M14.800 3v10" strokeWidth="1.2" />
            </Icon>
          </span>
          <span className="grid w-[30px] place-items-center">
            <Icon className="size-4" box={16}>
              <path d="m1.500 14.500 3-3M11.500 4.500l3-3" strokeWidth="1.5" />
              <path d="m3.500 12.500.5-4 3.500-3 3 3-3 3.500zM8.500 5.500l4.500-2-1.500 5z" fill="currentColor" stroke="none" />
            </Icon>
          </span>
          <button type="button" aria-label="展开托盘" className="grid w-[30px] place-items-center">
            <Icon className="size-3" box={12}>
              <path d="m3.500 1 5 5-5 5" strokeWidth="1.2" />
            </Icon>
          </button>
          <span className="mr-3 ml-[5px] h-[18px] w-0.5 bg-[#2c4a45]" />
          <svg viewBox="0 0 24 16" className="h-4 w-6" aria-hidden="true">
            <rect x="1" y="1" width="16" height="14" rx="2" fill="#ef5f54" />
            <circle cx="9" cy="8" r="3.8" fill="none" stroke="#c9443c" strokeWidth="1.4" />
            <circle cx="9" cy="8" r="1.2" fill="#c9443c" />
            <path d="M18 6.500 23 3v10l-5-3.500z" fill="#ef5f54" />
          </svg>
          <time className="ml-1 text-xs leading-4">00:00:30</time>
        </div>
      </div>
    </div>
  );
}

/* ------------------------------------------------------------------ */

export default function App() {
  return (
    <div className="relative flex h-screen flex-col overflow-hidden bg-white font-['Noto_Sans','Noto_Sans_CJK_SC',sans-serif] text-[#333]">
      <header className="flex h-6 shrink-0 items-center justify-center pt-0.5 text-sm">
        <h1>亿图脑图MindMaster (Pro)</h1>
      </header>
      <TabBar />
      <Ribbon />
      <div className="h-6 shrink-0 border-b border-[#dcdcdc] bg-[#f3f3f3]" />
      <main className="flex min-h-0 flex-1">
        <div className="flex min-w-0 flex-1 flex-col">
          <div className="flex min-h-0 flex-1">
            <div className="relative min-w-0 flex-1 overflow-hidden">
              <Chart />
              <FormatBar />
              <div className="absolute bottom-11 left-0 flex h-[57px] w-[41px] items-center rounded-r-md bg-[#222] text-white">
                <span className="mb-4 flex flex-col gap-2">
                  <span className="h-px w-0.5 bg-white" />
                  <span className="h-px w-0.5 bg-white" />
                </span>
                <button type="button" aria-label="关闭" className="ml-[13px]">
                  <Icon className="size-3" box={12}>
                    <path d="m1 1 10 10M11 1 1 11" strokeWidth="1" />
                  </Icon>
                </button>
              </div>
            </div>
            <div className="flex w-[9px] shrink-0 flex-col">
              <div className="h-[41%]" />
              <div className="h-[51%] rounded-full bg-[#cbcbcd]" />
            </div>
          </div>
          <div className="flex h-[9px] shrink-0">
            <div className="min-w-0 flex-1">
              <div className="h-full w-[70.5%] rounded-r-full bg-[#d1d1d1]" />
            </div>
            <div className="w-[9px] border-t border-l border-[#bbb]" />
          </div>
        </div>
        <SidePanel />
      </main>
      <StatusBar />
      <Taskbar />
      <div className="absolute bottom-[55px] left-1/2 flex h-7 -translate-x-1/2 items-start rounded-xl bg-[#f6f6f6]/90 px-[3px] pt-0.5 text-[13px] leading-5 text-[#333]">
        LCTRL
      </div>
    </div>
  );
}
